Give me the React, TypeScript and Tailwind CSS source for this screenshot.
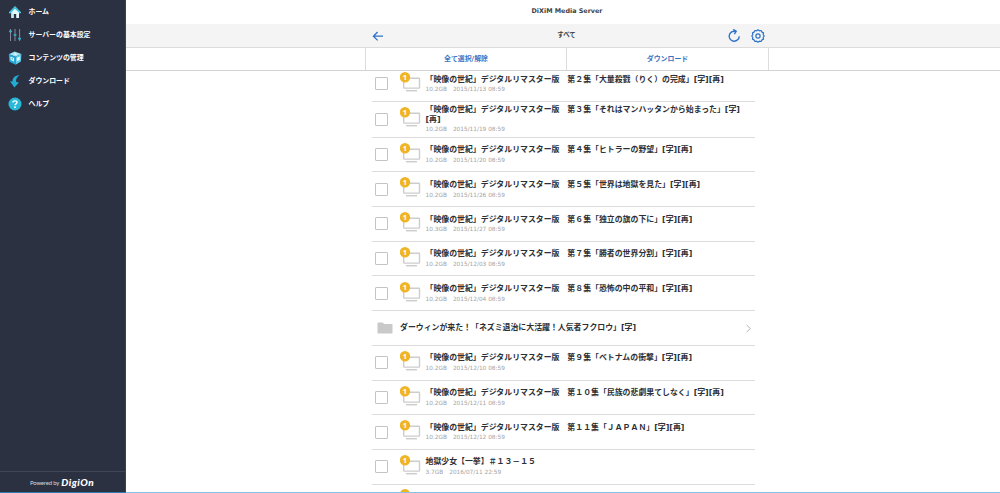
import React from 'react';

type MediaItem = {
  kind: 'video' | 'folder';
  title: string;
  size?: string;
  date?: string;
};

const SERIES = '「映像の世紀」デジタルリマスター版　';

const items: MediaItem[] = [
  { kind: 'video', title: `${SERIES}第２集「大量殺戮（りく）の完成」[字][再]`, size: '10.2GB', date: '2015/11/13 08:59' },
  { kind: 'video', title: `${SERIES}第３集「それはマンハッタンから始まった」[字][再]`, size: '10.2GB', date: '2015/11/19 08:59' },
  { kind: 'video', title: `${SERIES}第４集「ヒトラーの野望」[字][再]`, size: '10.2GB', date: '2015/11/20 08:59' },
  { kind: 'video', title: `${SERIES}第５集「世界は地獄を見た」[字][再]`, size: '10.2GB', date: '2015/11/26 08:59' },
  { kind: 'video', title: `${SERIES}第６集「独立の旗の下に」[字][再]`, size: '10.3GB', date: '2015/11/27 08:59' },
  { kind: 'video', title: `${SERIES}第７集「勝者の世界分割」[字][再]`, size: '10.2GB', date: '2015/12/03 08:59' },
  { kind: 'video', title: `${SERIES}第８集「恐怖の中の平和」[字][再]`, size: '10.2GB', date: '2015/12/04 08:59' },
  { kind: 'folder', title: 'ダーウィンが来た！「ネズミ退治に大活躍！人気者フクロウ」[字]' },
  { kind: 'video', title: `${SERIES}第９集「ベトナムの衝撃」[字][再]`, size: '10.2GB', date: '2015/12/10 08:59' },
  { kind: 'video', title: `${SERIES}第１０集「民族の悲劇果てしなく」[字][再]`, size: '10.2GB', date: '2015/12/11 08:59' },
  { kind: 'video', title: `${SERIES}第１１集「ＪＡＰＡＮ」[字][再]`, size: '10.2GB', date: '2015/12/12 08:59' },
  { kind: 'video', title: '地獄少女【一挙】＃１３－１５', size: '3.7GB', date: '2016/07/11 22:59' },
];

function HomeIcon() {
  return (
    <svg className="w-[14px] h-[14px]" viewBox="0 0 14 14">
      <path d="M7 1.2 .9 7.4 2 8.5 3 7.7V13H5.8V9H8.2V13H11V7.7L12 8.5 13.1 7.4Z" fill="#e6f7fb" />
      <path d="M7 1.2 .9 7.4 2 8.5 7 3.7 12 8.5 13.1 7.4Z" fill="#2fc0dc" />
      <path d="M3 7.7V13H4.4V6.3Z" fill="#8edcec" />
    </svg>
  );
}

function SlidersIcon() {
  return (
    <svg className="w-[14px] h-[14px]" viewBox="0 0 14 14" fill="none">
      <path d="M2.5 1V13M7 1V13M11.6 1V13" stroke="#8e95a3" strokeWidth="0.9" />
      <path d="M1.1 3.4H3.9M5.6 7H8.4M10.2 10.6H13" stroke="#2fb5d6" strokeWidth="1.6" />
    </svg>
  );
}

function CubeIcon() {
  return (
    <svg className="w-[14px] h-[14px]" viewBox="0 0 14 14">
      <path d="M6.6.4 13.4 3 7.6 5.8.8 3.3Z" fill="#9be2f3" />
      <path d="M.8 3.3 7.6 5.8V13.8L1.4 10.7Z" fill="#27a9d8" />
      <path d="M13.4 3 7.6 5.8V13.8L12.9 10.6Z" fill="#5fcbea" />
      <path d="m2.4 5.8 3.6 1.3v3.4L2.7 9ZM8.8 7l3.1-1.6-.2 3.4-2.9 1.7ZM5 3.1l2-.9 2.6.9-2 .9Z" fill="#effbff" />
      <path d="m3.5 7 1.5.6v1.2l-1.4-.6Z" fill="#27a9d8" />
    </svg>
  );
}

function DownloadIcon() {
  return (
    <svg className="w-[14px] h-[14px]" viewBox="0 0 14 14">
      <path d="M11.6.9C7.2 1.2 4.3 3.7 4.5 7.6L2 7.3 6.4 13.4 11 8.6 8.2 8.1C7.6 5.2 8.9 2.6 11.6.9Z" fill="#22acd3" />
    </svg>
  );
}

function HelpIcon() {
  return (
    <svg className="w-[14px] h-[14px]" viewBox="0 0 14 14" fill="none">
      <circle cx="7" cy="7" r="6.5" fill="#29b9d8" />
      <path d="M5 5.5C5 3.3 9 3.3 9 5.5C9 6.9 7 6.8 7 8.3" stroke="#fff" strokeWidth="1.4" />
      <circle cx="7" cy="10.2" r="0.9" fill="#fff" />
    </svg>
  );
}

const menu = [
  { label: 'ホーム', icon: HomeIcon },
  { label: 'サーバーの基本設定', icon: SlidersIcon },
  { label: 'コンテンツの管理', icon: CubeIcon },
  { label: 'ダウンロード', icon: DownloadIcon },
  { label: 'ヘルプ', icon: HelpIcon },
];

function Sidebar() {
  return (
    <aside className="w-[126px] shrink-0 flex flex-col bg-[#2c3142] border-r border-[#3d4252] text-white">
      <nav className="flex-1">
        {menu.map(({ label, icon: Icon }) => (
          <a key={label} className="flex items-center h-[23.1px] pl-2 gap-[6.5px] text-[6.9px] font-bold whitespace-nowrap">
            <Icon />
            <span className="pt-[1px]">{label}</span>
          </a>
        ))}
      </nav>
      <div className="h-[21px] border-t border-[#414656] flex items-center pl-[30px] gap-[2px]">
        <span className="font-['Lato'] text-[6px] tracking-[-0.2px] text-[#d5d7dc] whitespace-nowrap">Powered by</span>
        <span className="font-['Lato'] text-[10px] leading-none font-black italic tracking-[0.5px]">DigiOn</span>
      </div>
    </aside>
  );
}

// Monitor with the yellow "new" counter on its corner
function VideoIcon() {
  return (
    <svg className="w-[21px] h-[21px] shrink-0 mb-[2.5px]" viewBox="0 0 21 21">
      <rect x="3.7" y="6.3" width="15.8" height="9.8" rx="0.6" fill="#fff" stroke="#cdcdcd" strokeWidth="1.4" />
      <path d="M6 18.7H17" stroke="#cdcdcd" strokeWidth="1.5" />
      <circle cx="5" cy="5.2" r="5.2" fill="#efb526" />
      <text x="5" y="8" textAnchor="middle" fontSize="7.5" className="font-['Open_Sans'] font-bold" fill="#fff">1</text>
    </svg>
  );
}

function FolderIcon() {
  return (
    <svg className="w-[16px] h-[12px] shrink-0" viewBox="0 0 16 12">
      <path d="M.5 1.1Q.5.5 1.1.5H5.6L7.2 2H14.8Q15.5 2 15.5 2.7V10.8Q15.5 11.5 14.8 11.5H1.1Q.5 11.5.5 10.8Z" fill="#c9c9c9" />
    </svg>
  );
}

function MediaRow({ item }: { item: MediaItem }) {
  if (item.kind === 'folder') {
    return (
      <li className="flex items-center h-[34.7px] shrink-0 border-b border-[#dcdcdc] pl-[5px] pr-1">
        <FolderIcon />
        <span className="flex-1 pl-[7px] text-[7.9px] leading-[10px] font-bold">{item.title}</span>
        <svg className="w-[5px] h-[9px] mt-[2px]" viewBox="0 0 5 9" fill="none">
          <path d="M.6.8 4.2 4.5.6 8.2" stroke="#b5b5b5" strokeWidth="1" />
        </svg>
      </li>
    );
  }

  // Titles past this length wrap onto a second line
  const isLong = item.title.length > 42;

  return (
    <li className={`flex items-center shrink-0 border-b border-[#dcdcdc] pl-[3px] ${isLong ? 'h-[36px]' : 'h-[34.7px]'}`}>
      <span className="w-[13px] h-[13px] shrink-0 border border-[#c4c4c4] rounded-[1px] bg-white mr-[12px]" />
      <VideoIcon />
      <div className="flex-1 pl-[4.5px] pr-[12px] pt-[1.8px]">
        <p className="text-[7.9px] leading-[9.7px] font-bold">{item.title}</p>
        <p className="text-[5.8px] leading-[10.7px] text-[#a3a3a3] flex gap-[6px]">
          <span>{item.size}</span>
          <span>{item.date}</span>
        </p>
      </div>
    </li>
  );
}

export default function App() {
  return (
    <div className="w-[1000px] h-[493px] flex flex-col overflow-hidden bg-white text-[#2b2f36] font-['DejaVu_Sans','Noto_Sans_CJK_JP',sans-serif]">
      <div className="flex flex-1 min-h-0">
        <Sidebar />
        <main className="flex-1 min-w-0 flex flex-col">
          <h1 className="h-[24px] shrink-0 flex items-center justify-center pl-[8px] text-[6.4px] font-bold text-[#3c3f45]">
            DiXiM Media Server
          </h1>

          {/* Toolbar */}
          <div className="h-[24px] shrink-0 bg-[#f4f4f4] border-b border-[#dcdcdc] flex justify-center">
            <div className="w-[403px] ml-[8px] flex items-center justify-between pl-[6px] pr-[4px]">
              <svg className="w-[34px] h-[12px]" viewBox="0 0 34 12" fill="none" stroke="#2f73c9" strokeWidth="1.3">
                <path d="M11 6.2H1.4M5.6 2 1.4 6.2 5.6 10.4" />
              </svg>
              <span className="text-[6.4px] font-bold text-[#3c3f45]">すべて</span>
              <div className="flex items-center gap-[10px]">
                <svg className="w-[13px] h-[13px]" viewBox="0 0 13 13" fill="none" stroke="#2f73c9" strokeWidth="1.4">
                  <path d="M11.2 7.2A5 5 0 1 1 7.2 2.3M5.2.4 8.2 2.2 6.4 5.2" />
                </svg>
                <svg className="w-[14px] h-[14px]" viewBox="0 0 14 14" fill="none" stroke="#2f73c9" strokeWidth="1.2">
                  <path d="M5.6 1.8 7 .8 8.4 1.8 10.1 1.5 10.9 3.1 12.5 3.9 12.2 5.6 13.2 7 12.2 8.4 12.5 10.1 10.9 10.9 10.1 12.5 8.4 12.2 7 13.2 5.6 12.2 3.9 12.5 3.1 10.9 1.5 10.1 1.8 8.4.8 7 1.8 5.6 1.5 3.9 3.1 3.1 3.9 1.5Z" strokeLinejoin="round" />
                  <circle cx="7" cy="7" r="2.1" />
                </svg>
              </div>
            </div>
          </div>

          <div className="h-[23px] shrink-0 border-b border-[#d4d4d4] flex justify-center">
            <div className="w-[404px] ml-[8px] grid grid-cols-2 border-x border-[#dcdcdc] text-[6.9px] font-bold text-[#3872c4]">
              <button className="border-r border-[#dcdcdc]">全て選択/解除</button>
              <button>ダウンロード</button>
            </div>
          </div>

          {/* Scrolled list, first row is partly under the action bar */}
          <div className="flex-1 min-h-0 overflow-hidden">
            <ul className="w-[383px] ml-[246px] -mt-[4px] flex flex-col">
              {items.map((item, i) => (
                <MediaRow key={i} item={item} />
              ))}
              {/* Next row, only the top of its badge is in view */}
              <li className="shrink-0 pl-[28px] pt-[4.5px]">
                <div className="w-[10.4px] h-[10.4px] rounded-full bg-[#efb526]" />
              </li>
            </ul>
          </div>
        </main>
      </div>
      <div className="h-px shrink-0 flex">
        <div className="w-[126px] bg-[#2f79ad]" />
        <div className="flex-1 bg-[#85c1e2]" />
      </div>
    </div>
  );
}
